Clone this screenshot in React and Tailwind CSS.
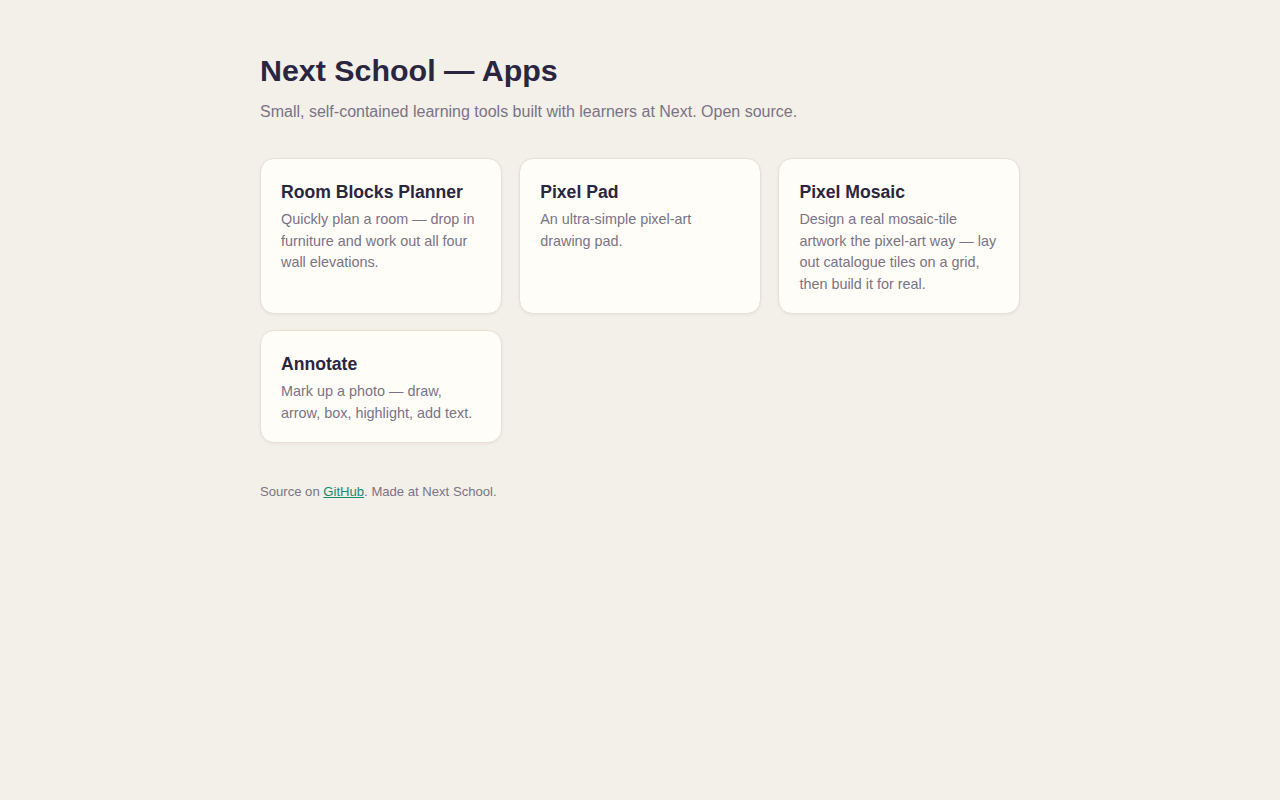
export default function App() {
  const apps = [
    { t: "Room Blocks Planner", d: "Quickly plan a room — drop in furniture and work out all four wall elevations." },
    { t: "Pixel Pad", d: "An ultra-simple pixel-art drawing pad." },
    { t: "Pixel Mosaic", d: "Design a real mosaic-tile artwork the pixel-art way — lay out catalogue tiles on a grid, then build it for real." },
    { t: "Annotate", d: "Mark up a photo — draw, arrow, box, highlight, add text." },
  ];
  return (
    <div className="min-h-screen bg-[#f3efe9] font-['Liberation_Sans',Arial,sans-serif]">
      <div className="mx-auto w-[760px] pt-[52px]">
        <h1 className="text-[30.4px] leading-[36px] font-bold text-[#2a2540]">Next School — Apps</h1>
        <p className="mt-[12px] text-[16px] leading-[24px] text-[#7a7385]">
          Small, self-contained learning tools built with learners at Next. Open source.
        </p>
        <div className="mt-[34px] grid grid-cols-3 gap-x-[17.6px] gap-y-[15.6px]">
          {apps.map((a) => (
            <div
              key={a.t}
              className="rounded-[14px] border border-[#e6e0d6] bg-[#fffdf8] px-5 pt-[22px] pb-[18px] shadow-[0_1px_3px_rgba(60,40,20,0.06)]"
            >
              <h2 className="text-[17.6px] leading-[23px] font-bold text-[#2a2540]">{a.t}</h2>
              <p className="mt-[5px] text-[14.4px] leading-[21.6px] text-[#7a7385]">{a.d}</p>
            </div>
          ))}
        </div>
        <p className="mt-[39px] text-[13.1px] leading-[20px] text-[#7a7385]">
          Source on{" "}
          <a href="#" className="text-[#1a8a6e] underline">GitHub</a>. Made at Next School.
        </p>
      </div>
    </div>
  );
}
